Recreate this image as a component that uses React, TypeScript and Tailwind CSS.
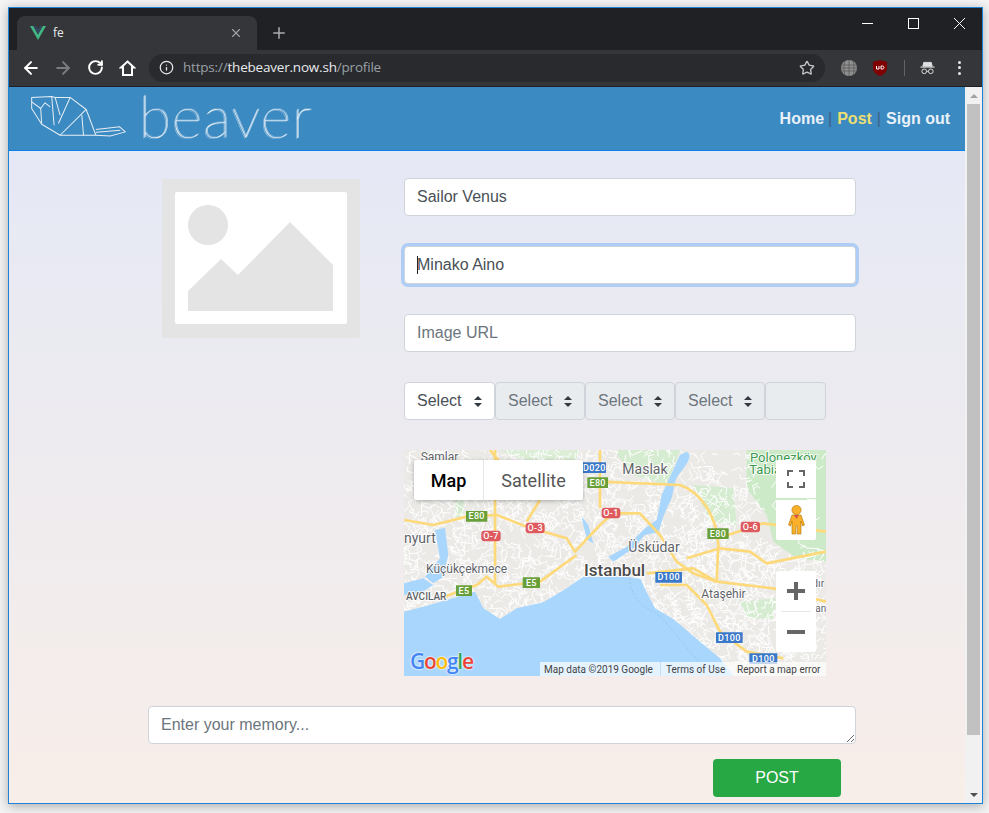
import { ArrowLeft, ArrowRight, Info, Minus, Plus, RotateCw, Star, X } from "lucide-react";

// deterministic street texture for the map
function streets() {
  const out: string[] = [];
  let seed = 7;
  const rnd = () => {
    seed = (seed * 16807) % 2147483647;
    return seed / 2147483647;
  };
  for (let i = 0; i < 2600; i++) {
    const x = 12 + rnd() * 1266;
    const y = 15 + rnd() * 640;
    const a = rnd() * 6.28;
    const l = 10 + rnd() * 26;
    const bx = x + Math.cos(a) * l;
    const by = y + Math.sin(a) * l;
    const cx = bx + Math.cos(a + 1.4) * l * 0.6;
    const cy = by + Math.sin(a + 1.4) * l * 0.6;
    // leave the parks and the far north-east emptier
    if (x > 1060 && y < 300 && rnd() > 0.15) continue;
    if (x > 640 && x < 1040 && y < 130 && rnd() > 0.5) continue;
    out.push(`M${x.toFixed(0)} ${y.toFixed(0)}L${bx.toFixed(0)} ${by.toFixed(0)}L${cx.toFixed(0)} ${cy.toFixed(0)}`);
  }
  return out.join("");
}

const shields = [
  { x: 198, y: 198, w: 64, t: "E80", c: "#689f38" },
  { x: 562, y: 97, w: 62, t: "E80", c: "#689f38" },
  { x: 922, y: 250, w: 64, t: "E80", c: "#689f38" },
  { x: 368, y: 397, w: 52, t: "E5", c: "#689f38" },
  { x: 168, y: 421, w: 48, t: "E5", c: "#689f38" },
  { x: 548, y: 52, w: 70, t: "D020", c: "#3a78c9" },
  { x: 766, y: 381, w: 80, t: "D100", c: "#3a78c9" },
  { x: 948, y: 562, w: 80, t: "D100", c: "#3a78c9" },
  { x: 1048, y: 625, w: 84, t: "D100", c: "#3a78c9" },
  { x: 605, y: 188, w: 56, t: "O-1", c: "#de5a5e" },
  { x: 377, y: 233, w: 57, t: "O-3", c: "#de5a5e" },
  { x: 244, y: 257, w: 58, t: "O-7", c: "#de5a5e" },
  { x: 1022, y: 230, w: 58, t: "O-6", c: "#de5a5e" },
];

const MapArt = () => (
  <svg viewBox="12 15 1266 678" className="absolute inset-0 w-full h-full" fontFamily="Roboto, sans-serif">
    <rect x="12" y="15" width="1266" height="678" fill="#eceae7" />
    {/* green areas */}
    <path d="M1040 15H1278V350L1190 340L1120 290L1100 210L1040 130Z" fill="#cdeac8" />
    <path d="M640 15H840L800 120L700 90Z" fill="#d5ecd0" />
    <path d="M880 120L1000 130L1010 240L930 230Z" fill="#d5ecd0" />
    <path d="M1020 470L1130 460L1120 520L1040 520Z" fill="#d5ecd0" />
    <path d="M165 165H190V215H165Z" fill="#d5ecd0" />
    <path d="M300 15H540L520 60L380 50Z" fill="#dceed6" />
    {/* streets */}
    <path d={streets()} fill="none" stroke="#ffffff" strokeWidth="3" />
    {/* sea and straits */}
    <path
      d="M12 500L70 485L140 465L225 440L250 490L300 522L350 490L430 472L500 430L550 395L680 395L722 402L735 432L765 490L820 522L900 590L960 640L1000 693H12Z"
      fill="#a8d6fd"
    />
    <path d="M860 20C880 30 860 60 835 90C815 120 825 150 805 180L790 215L775 262L735 270L700 310L640 350L625 335L680 305L735 250L770 225L785 150L815 85L840 30Z" fill="#a8d6fd" />
    <path d="M105 255L135 248L145 330L130 395L100 415L75 395L120 340Z" fill="#a8d6fd" />
    <path d="M12 415L70 400L100 420L60 445L12 450Z" fill="#a8d6fd" />
    <path d="M545 215L565 240L580 295L562 285L552 250Z" fill="#a8d6fd" />
    <path d="M690 400C690 450 720 480 760 500S860 620 910 660" fill="none" stroke="#8cbde8" strokeWidth="2" strokeDasharray="6 6" />
    {/* highways */}
    <g fill="none" stroke="#fdd97a" strokeWidth="8" strokeLinejoin="round">
      <path d="M12 225L100 240L200 215L290 210L380 245L500 280L525 320L600 240L640 205L720 205L780 270L830 350L880 385L950 410L1120 430L1278 470" />
      <path d="M600 15L600 190M600 110L840 120C900 140 950 210 955 300L950 410" />
      <path d="M285 15L285 420M120 460L230 420L260 395L295 425L420 410L530 330" />
      <path d="M955 280L1090 235L1278 260M860 340L960 310L1050 320L1100 355L1278 320" />
      <path d="M740 385L880 370L950 410M780 420L860 420L920 480L960 560L1040 620L1150 640" />
      <path d="M270 15L340 100M420 165L380 230" />
    </g>
    {/* place labels */}
    <g fill="#5f6368" stroke="#ffffff" strokeWidth="5" paintOrder="stroke">
      <text x="62" y="47" fontSize="36">Samlar</text>
      <text x="667" y="86" fontSize="42">Maslak</text>
      <text x="12" y="295" fontSize="42">nyurt</text>
      <text x="78" y="385" fontSize="36">Küçükçekmece</text>
      <text x="18" y="466" fontSize="30" fontWeight="500">AVCILAR</text>
      <text x="685" y="320" fontSize="42">Üsküdar</text>
      <text x="904" y="460" fontSize="36">Ataşehir</text>
      <text x="552" y="392" fontSize="51" fontWeight="500" fill="#4a4a4a">Istanbul</text>
      <text x="1050" y="50" fontSize="39" fill="#3c9a4e">Polonezköy</text>
      <text x="1048" y="88" fontSize="39" fill="#3c9a4e">Tabia</text>
      <text x="1236" y="425" fontSize="32">dır</text>
      <text x="1246" y="502" fontSize="30">an</text>
    </g>
    {/* road shields */}
    {shields.map((s) => (
      <g key={s.x + s.t}>
        <rect x={s.x} y={s.y} width={s.w} height="32" rx={s.c === "#de5a5e" ? 9 : 1} fill={s.c} />
        <text x={s.x + s.w / 2} y={s.y + 25} fontSize="27" fontWeight="500" letterSpacing="1" fill="#ffffff" textAnchor="middle">
          {s.t}
        </text>
      </g>
    ))}
  </svg>
);

const GoogleMap = () => (
  <div className="relative w-[422px] h-[226px] overflow-hidden font-['Roboto',sans-serif]">
    <MapArt />
    {/* map type control */}
    <div className="absolute left-[10px] top-[10px] w-[169px] h-[40px] bg-white flex rounded-[2px] shadow-[0_1px_4px_rgba(0,0,0,0.3)] text-[18px]">
      <div className="w-[70px] flex items-center justify-center font-medium text-black border-r border-[#e6e6e6]">Map</div>
      <div className="flex-1 flex items-center justify-center text-[#565656]">Satellite</div>
    </div>
    {/* fullscreen + pegman */}
    <div className="absolute left-[372px] top-[10px] w-[40px] flex flex-col gap-[2px]">
      <div className="h-[38px] bg-white flex items-center justify-center rounded-t-[2px]">
        <svg width="18" height="18" viewBox="0 0 18 18" fill="none" stroke="#666666" strokeWidth="2">
          <path d="M1 6V1H6M12 1H17V6M17 12V17H12M6 17H1V12" />
        </svg>
      </div>
      <div className="h-[40px] bg-white flex items-center justify-center rounded-b-[2px]">
        <svg width="17" height="30" viewBox="0 0 17 30">
          <circle cx="8.5" cy="5" r="4.6" fill="#fbb02b" stroke="#a87400" strokeWidth="0.6" />
          <path d="M4 10H13L16.5 20L14.5 21L13 16V29H9.2V21H7.8V29H4V16L2.500 21L0.500 20Z" fill="#fbb02b" stroke="#a87400" strokeWidth="0.6" />
          <path d="M6 10L8.500 14L11 10Z" fill="#d9534f" />
        </svg>
      </div>
    </div>
    {/* zoom control */}
    <div className="absolute left-[372px] top-[121px] w-[40px] h-[81px] bg-white rounded-[2px] flex flex-col items-center">
      <div className="h-[40px] flex items-center justify-center">
        <svg width="18" height="18" viewBox="0 0 18 18" fill="#666666">
          <path d="M7 0H11V7H18V11H11V18H7V11H0V7H7Z" />
        </svg>
      </div>
      <div className="w-[30px] h-px bg-[#e6e6e6]" />
      <div className="h-[40px] flex items-center justify-center">
        <svg width="18" height="4" viewBox="0 0 18 4" fill="#666666">
          <rect width="18" height="4" />
        </svg>
      </div>
    </div>
    {/* google logo */}
    <div className="absolute left-[6px] bottom-[2px] font-['Open_Sans',sans-serif] text-[21px] font-semibold leading-[26px] tracking-[-1.3px] [text-shadow:0_0_2px_#ffffff,0_0_2px_#ffffff]">
      <span className="text-[#4285f4]">G</span>
      <span className="text-[#ea4335]">o</span>
      <span className="text-[#fbbc05]">o</span>
      <span className="text-[#4285f4]">g</span>
      <span className="text-[#34a853]">l</span>
      <span className="text-[#ea4335]">e</span>
    </div>
    {/* attribution */}
    <div className="absolute right-0 bottom-0 w-[286px] h-[14px] bg-white/70 flex items-center text-[10px] text-[#444444] pl-[4px] whitespace-nowrap">
      <span className="w-[116px]">Map data ©2019 Google</span>
      <span className="w-[1px] h-full bg-[#c6def5]" />
      <span className="ml-[5px] w-[71px]">Terms of Use</span>
      <span>Report a map error</span>
    </div>
  </div>
);

const Sel = ({ on, w }: { on?: boolean; w: string }) => (
  <div
    className={`${w} ${on ? "bg-white text-[#495057]" : "bg-[#e9ecef] text-[#6c757d]"} h-[38px] border border-[#ced4da] rounded-[4px] flex items-center justify-between pl-[12px] pr-[12px] text-[16px]`}
  >
    <span>Select</span>
    <svg width="8" height="11" viewBox="0 0 8 11" fill="#343a40">
      <path d="M4 0L8 4H0ZM4 11L0 7H8Z" />
    </svg>
  </div>
);

const inputCls =
  "w-full h-[38px] bg-white border border-[#ced4da] rounded-[4px] px-[12px] text-[16px] text-[#495057] placeholder:text-[#6c757d] outline-none";

export default function App() {
  return (
    <div className="w-[989px] h-[813px] bg-[#f3f3f3] pt-[7px] pl-[8px] overflow-hidden font-['Liberation_Sans',Arial,sans-serif]">
      <div className="w-[975px] h-[797px] border border-[#1c83d8] flex flex-col shadow-[0_2px_10px_rgba(0,0,0,0.3)]">
        {/* title bar */}
        <div className="h-[42px] shrink-0 bg-[#202124] flex items-end pl-[8px] relative">
          <div className="w-[240px] h-[34px] bg-[#35363a] rounded-t-[8px] flex items-center pl-[13px] pr-[14px] text-[#e8eaed] font-['Open_Sans',sans-serif] text-[12px]">
            <svg width="16" height="14" viewBox="0 0 16 14">
              <path d="M0 0H3.200L8 8.500L12.800 0H16L8 14Z" fill="#41b883" />
              <path d="M3.200 0H6L8 3.600L10 0H12.800L8 8.500Z" fill="#35495e" />
            </svg>
            <span className="ml-[7px] flex-1">fe</span>
            <X size={14} strokeWidth={2} color="#9aa0a6" />
          </div>
          <Plus size={18} strokeWidth={2} color="#a8abb0" className="ml-[13px] mb-[8px]" />
          <div className="absolute right-0 top-0 h-[30px] flex">
            <div className="w-[46px] flex items-center justify-center"><div className="w-[11px] h-px bg-white" /></div>
            <div className="w-[46px] flex items-center justify-center"><div className="w-[11px] h-[11px] border border-white" /></div>
            <div className="w-[46px] flex items-center justify-center"><X size={21} strokeWidth={1} absoluteStrokeWidth color="#ffffff" /></div>
          </div>
        </div>
        {/* toolbar */}
        <div className="h-[37px] shrink-0 bg-[#35363a] border-b border-[#1f2023] flex items-center pl-[12px] pr-[13px] pb-[1px]">
          <ArrowLeft size={20} strokeWidth={2.4} color="#ffffff" />
          <ArrowRight size={20} strokeWidth={2.4} color="#7a7c80" className="ml-[12px]" />
          <RotateCw size={17} strokeWidth={2.8} color="#ffffff" className="ml-[14px]" />
          <svg width="17" height="16" viewBox="0 0 17 16" className="ml-[15px]" fill="none" stroke="#ffffff" strokeWidth="2">
            <path d="M8.500 1.500L15 7.500H13V15H4V7.500H2Z" strokeLinejoin="miter" />
          </svg>
          <div className="ml-[13px] w-[676px] h-[28px] bg-[#292a2d] rounded-full flex items-center pl-[10px] pr-[10px] text-[13.5px] font-['Open_Sans',sans-serif]">
            <Info size={15} strokeWidth={2} color="#e8eaed" />
            <span className="ml-[9px] flex-1 text-[#9aa0a6] whitespace-nowrap tracking-[-0.2px]">
              https://<span className="text-[#e8eaed]">thebeaver.now.sh</span>/profile
            </span>
            <Star size={16} strokeWidth={2} color="#c4c7ca" />
          </div>
          <svg width="16" height="16" viewBox="0 0 16 16" className="ml-[16px]" fill="none" stroke="#555555" strokeWidth="0.7">
            <circle cx="8" cy="8" r="8" fill="#8f8f8f" stroke="none" />
            <path d="M0 5H16M0 8H16M0 11H16M8 0V16M4 1C2.500 5 2.500 11 4 15M12 1C13.500 5 13.500 11 12 15" />
          </svg>
          <svg width="14" height="16" viewBox="0 0 14 16" className="ml-[16px]">
            <path d="M7 0L14 2V8C14 12 10 15 7 16C4 15 0 12 0 8V2Z" fill="#800000" />
            <path d="M3.500 6V9H6V6M8 6V9H9.500C11.500 9 11.500 6 9.500 6Z" fill="none" stroke="#ffffff" strokeWidth="1" />
          </svg>
          <div className="ml-[17px] w-px h-[16px] bg-[#5f6368]" />
          <svg width="15" height="14" viewBox="0 0 16 14" className="ml-[15px]" fill="none" stroke="#e0e0e0" strokeWidth="1">
            <path d="M4 1H12L13 5H3Z" fill="#e0e0e0" />
            <path d="M0.500 6H15.500" strokeWidth="1.200" />
            <circle cx="4.500" cy="10.500" r="2.500" />
            <circle cx="11.500" cy="10.500" r="2.500" />
            <path d="M7 10.500H9" />
          </svg>
          <div className="ml-[23px] flex flex-col gap-[2.500px]">
            <div className="w-[3px] h-[3px] rounded-full bg-[#e8eaed]" />
            <div className="w-[3px] h-[3px] rounded-full bg-[#e8eaed]" />
            <div className="w-[3px] h-[3px] rounded-full bg-[#e8eaed]" />
          </div>
        </div>
        {/* page */}
        <div className="flex-1 flex min-h-0">
          <div className="w-[956px] flex flex-col bg-[linear-gradient(180deg,#e3e8f6_0%,#f8eee9_100%)]">
            <header className="h-[64px] shrink-0 bg-[#3c8ac2] border-b border-[#0c7fe8] flex items-start relative">
              <svg width="97" height="42" viewBox="90 285 290 125" className="ml-[21px] mt-[8px]" fill="none" stroke="#e6eef4" strokeWidth="3" strokeLinejoin="round">
                <path d="M95 292L155 289L165 292L210 292L258 328L287 405H180L125 372L95 325Z" />
                <path d="M155 289L162 375M165 292L180 345M210 292L175 370M258 328L180 405M245 345L250 405M95 305L122 325L135 308L150 320M122 325L125 372" />
                <path d="M287 388L358 380L375 395L330 407L287 405M287 396L360 390" />
              </svg>
              <span className="ml-[12px] mt-[-6px] text-[#eef4f8] font-['Lato',sans-serif] font-thin text-[58px] leading-[70px] tracking-[1.300px] [text-shadow:1px_0_0_rgba(255,255,255,0.5),-1px_1px_0_rgba(255,255,255,0.4),1px_-1px_0_rgba(255,255,255,0.3)]">
                beaver
              </span>
              <nav className="ml-auto mr-[15px] mt-[22px] flex items-center text-[16px] font-bold text-[#e9f1f8] leading-[20px]">
                <span>Home</span>
                <span className="ml-[4px] mr-[5px] font-normal text-[#3f5f80]">|</span>
                <span className="text-[#ecdf72]">Post</span>
                <span className="mx-[5px] font-normal text-[#3f5f80]">|</span>
                <span>Sign out</span>
              </nav>
            </header>
            <main className="flex-1 pt-[27px]">
              <div className="flex">
                <div className="w-[395px] pl-[153px] pt-[1px]">
                  <div className="w-[198px] h-[159px] bg-[#e4e4e4] rounded-[2px] p-[13px]">
                    <div className="w-[172px] h-[132px] bg-white rounded-[2px]">
                      <svg width="172" height="132" viewBox="175 192 172 132" fill="#e4e4e4">
                        <circle cx="208" cy="225" r="20" />
                        <path d="M188 291L221 259L238 275L290 222L333 265V311H188Z" />
                      </svg>
                    </div>
                  </div>
                </div>
                <div className="w-[452px] flex flex-col gap-[30px]">
                  <input className={inputCls} defaultValue="Sailor Venus" />
                  <div className="relative">
                    <input
                      className={`${inputCls} border-[#80bdff] shadow-[0_0_0_3px_rgba(0,123,255,0.25)]`}
                      defaultValue="Minako Aino"
                    />
                    <div className="absolute left-[13px] top-[10px] w-px h-[18px] bg-[#222222]" />
                  </div>
                  <input className={inputCls} placeholder="Image URL" />
                  <div className="flex">
                    <Sel on w="w-[91px]" />
                    <Sel w="w-[90px]" />
                    <Sel w="w-[90px]" />
                    <Sel w="w-[90px]" />
                    <div className="w-[61px] h-[38px] bg-[#e9ecef] border border-[#ced4da] rounded-[4px]" />
                  </div>
                  <GoogleMap />
                </div>
              </div>
              <div className="mt-[30px] ml-[139px] w-[708px]">
                <textarea
                  rows={1}
                  placeholder="Enter your memory..."
                  className="block w-full h-[38px] bg-white border border-[#ced4da] rounded-[4px] px-[12px] py-[6px] text-[16px] leading-[24px] text-[#495057] placeholder:text-[#6c757d] outline-none"
                />
              </div>
              <button className="block mt-[15px] ml-[704px] w-[128px] h-[38px] bg-[#28a745] rounded-[4px] text-white text-[16px]">
                POST
              </button>
            </main>
          </div>
          {/* scrollbar */}
          <div className="w-[17px] bg-[#f1f1f1] flex flex-col items-center">
            <div className="h-[17px] flex items-center justify-center">
              <div className="w-0 h-0 border-x-[4px] border-x-transparent border-b-[4px] border-b-[#a3a3a3]" />
            </div>
            <div className="w-[13px] h-[631px] bg-[#c1c1c1]" />
            <div className="flex-1" />
            <div className="h-[17px] flex items-center justify-center">
              <div className="w-0 h-0 border-x-[4px] border-x-transparent border-t-[4px] border-t-[#505050]" />
            </div>
          </div>
        </div>
      </div>
    </div>
  );
}
